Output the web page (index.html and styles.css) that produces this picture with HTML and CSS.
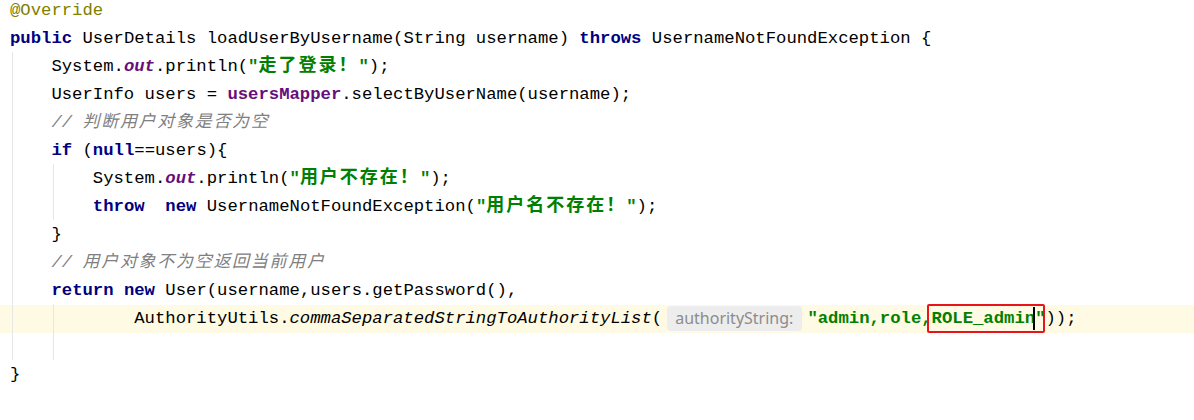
FILE: index.html
```html
<!DOCTYPE html>
<html lang="zh-CN">
<head>
    <meta charset="UTF-8">
    <meta name="viewport" content="width=device-width, initial-scale=1.0">
    <title>loadUserByUsername</title>
    <link rel="stylesheet" href="styles.css">
</head>
<body>

    <div class="editor">
        <!-- indent guides -->
        <div class="guide guide-body"></div>
        <div class="guide guide-if"></div>
        <div class="guide guide-args"></div>

        <div class="line"><span class="ann">@Override</span></div>
        <div class="line"><span class="kw">public</span> UserDetails loadUserByUsername(String username) <span class="kw">throws</span> UsernameNotFoundException {</div>
        <div class="line">    System.<span class="st">out</span>.println(<span class="str">"<span class="cjk">走了登录！</span>"</span>);</div>
        <div class="line">    UserInfo users = <span class="fld">usersMapper</span>.selectByUserName(username);</div>
        <div class="line">    <span class="cm">// <span class="cjk">判断用户对象是否为空</span></span></div>
        <div class="line">    <span class="kw">if</span> (<span class="kw">null</span>==users){</div>
        <div class="line">        System.<span class="st">out</span>.println(<span class="str">"<span class="cjk">用户不存在！</span>"</span>);</div>
        <div class="line">        <span class="kw">throw</span>  <span class="kw">new</span> UsernameNotFoundException(<span class="str">"<span class="cjk">用户名不存在！</span>"</span>);</div>
        <div class="line">    }</div>
        <div class="line">    <span class="cm">// <span class="cjk">用户对象不为空返回当前用户</span></span></div>
        <div class="line">    <span class="kw">return</span> <span class="kw">new</span> User(username,users.getPassword(),</div>
        <div class="line current">            AuthorityUtils.<span class="it">commaSeparatedStringToAuthorityList</span>(<span class="hint">authorityString:</span><span class="str">"admin,role,<span class="mark">ROLE_admin</span><span class="caret"></span>"</span>));</div>
        <div class="line"></div>
        <div class="line">}</div>
    </div>

</body>
</html>
```

FILE: styles.css
```css
/* Editor */
body {
    margin: 0;
    background-color: #fff;
    font-family: "Liberation Mono", "Noto Sans CJK SC", monospace;
    font-size: 17.25px;
    color: #000;
}

.editor {
    position: relative;
    margin-top: -3px;
}

.line {
    height: 28px;
    line-height: 28px;
    padding-left: 10px;
    white-space: pre;
}

.line.current {
    background-color: #fffae3;
}

/* indent guides */
.guide {
    position: absolute;
    width: 1px;
    background-color: #e6e6e6;
    z-index: 1;
}

.guide-body {
    left: 12px;
    top: 55px;
    height: 308px;
}

.guide-if {
    left: 53px;
    top: 167px;
    height: 56px;
}

.guide-args {
    left: 53px;
    top: 307px;
    height: 56px;
}

/* syntax */
.kw {
    color: #000080;
    font-weight: bold;
}

.ann {
    color: #808000;
}

.str {
    color: #008000;
    font-weight: bold;
}

.cm {
    color: #808080;
    font-style: italic;
}

.st {
    color: #660e7a;
    font-style: italic;
    font-weight: bold;
}

.fld {
    color: #660e7a;
    font-weight: bold;
}

.it {
    font-style: italic;
}

.cjk {
    font-family: "Noto Sans CJK SC", sans-serif;
    font-size: 18px;
    line-height: 1;
    letter-spacing: 2px;
}

.cm .cjk {
    font-size: 17px;
    letter-spacing: 1.7px;
}

/* parameter hint */
.hint {
    display: inline-block;
    vertical-align: middle;
    height: 25px;
    line-height: 25px;
    padding: 0 9px 0 8px;
    margin: 0 5px;
    border-radius: 4px;
    background-color: #ededed;
    color: #8c8c8c;
    font-family: "Noto Sans", sans-serif;
    font-size: 16px;
}

/* red annotation box and caret */
.mark {
    position: relative;
}

.mark::after {
    content: "";
    position: absolute;
    left: -5px;
    right: -10px;
    top: -5px;
    bottom: -5px;
    border: 2px solid #e8141c;
    border-radius: 2px;
}

.caret {
    position: relative;
}

.caret::before {
    content: "";
    position: absolute;
    left: -2px;
    top: -2px;
    bottom: -2px;
    width: 2px;
    background-color: #000;
}
```
